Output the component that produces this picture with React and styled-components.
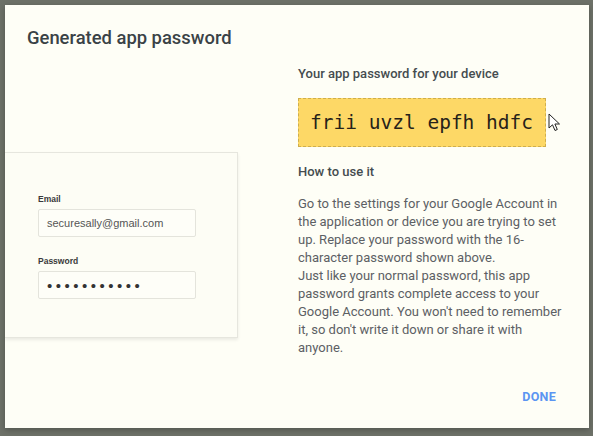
import styled, { createGlobalStyle } from "styled-components";

const GlobalStyle = createGlobalStyle`
  html, body {
    margin: 0;
    padding: 0;
    background: #6d7168;
  }
  body {
    font-family: Roboto, "Noto Sans", Arial, sans-serif;
  }
`;

const Backdrop = styled.div`
  width: 593px;
  height: 436px;
  padding: 5px 4px 8px 5px;
  box-sizing: border-box;
`;

const Dialog = styled.div`
  width: 584px;
  height: 423px;
  background: #fefef6;
  display: flex;
  flex-direction: column;
  overflow: hidden;
  box-shadow: 0 2px 6px rgba(0, 0, 0, 0.25);
`;

const Title = styled.h2`
  margin: 0;
  padding: 21px 22px 0;
  font-size: 18.4px;
  line-height: 24px;
  font-weight: 500;
  color: #3a4246;
`;

const Body = styled.div`
  display: flex;
`;

const LeftPane = styled.div`
  width: 293px;
  flex-shrink: 0;
`;

const LoginCard = styled.div`
  margin-top: 102px;
  width: 233px;
  height: 186px;
  border: 1px solid #e6e6de;
  border-left: none;
  background: #fdfdf5;
  box-shadow: 0 2px 3px rgba(0, 0, 0, 0.08);
  padding: 41px 0 0 33px;
  box-sizing: border-box;
  font-family: "Liberation Sans", Arial, sans-serif;
`;

const FieldLabel = styled.div`
  font-size: 8.5px;
  line-height: 10px;
  font-weight: bold;
  color: #3a3a3a;
  margin-bottom: 5px;
`;

const FieldBox = styled.div`
  width: 158px;
  height: 28px;
  box-sizing: border-box;
  border: 1px solid #e4e4dc;
  border-radius: 2px;
  background: #fefef8;
  padding-left: 8px;
  display: flex;
  align-items: center;
  font-size: ${(p) => (p.$dots ? "15px" : "11px")};
  letter-spacing: ${(p) => (p.$dots ? "3.5px" : "0")};
  color: ${(p) => (p.$dots ? "#333" : "#555")};
  margin-bottom: ${(p) => (p.$last ? "0" : "19px")};
`;

const RightPane = styled.div`
  flex: 1;
  padding: 14px 24px 0 0;
  color: #3c4043;
`;

const Heading = styled.div`
  font-size: 13px;
  line-height: 20px;
  font-weight: 500;
  color: #454c4f;
`;

const PasswordWrap = styled.div`
  position: relative;
  margin: 14px 0 15px;
  display: inline-block;
`;

const PasswordBox = styled.div`
  height: 49px;
  box-sizing: border-box;
  padding: 0 12px 0 11px;
  background: #fdd866;
  border: 1px dashed #cfae4c;
  font-family: "DejaVu Sans Mono", "Liberation Mono", monospace;
  font-size: 19.5px;
  line-height: 47px;
  color: #262219;
  white-space: nowrap;
`;

const Cursor = styled.svg`
  position: absolute;
  left: 250px;
  top: 15px;
`;

const Paragraph = styled.p`
  margin: 13px 0 0;
  font-size: 13px;
  line-height: 18px;
  color: #5c6064;
`;

const Footer = styled.div`
  margin-top: auto;
  display: flex;
  justify-content: flex-end;
  padding: 0 25px 14px;
`;

const TextButton = styled.button`
  height: 36px;
  padding: 0 8px;
  border: none;
  background: transparent;
  font-family: Roboto, Arial, sans-serif;
  font-size: 12.5px;
  font-weight: 700;
  letter-spacing: 0.3px;
  color: #5b95f2;
  cursor: pointer;
`;

export default function App() {
  return (
    <>
      <GlobalStyle />
      <Backdrop>
        <Dialog>
          <Title>Generated app password</Title>
          <Body>
            <LeftPane>
              <LoginCard>
                <FieldLabel>Email</FieldLabel>
                <FieldBox>securesally@gmail.com</FieldBox>
                <FieldLabel>Password</FieldLabel>
                <FieldBox $dots $last>
                  •••••••••••
                </FieldBox>
              </LoginCard>
            </LeftPane>
            <RightPane>
              <Heading>Your app password for your device</Heading>
              <PasswordWrap>
                <PasswordBox>frii uvzl epfh hdfc</PasswordBox>
                <Cursor width="13" height="19" viewBox="0 0 13 19">
                  <path
                    d="M1 1 L1 15 L4.5 11.8 L7 17.5 L9.3 16.5 L6.9 11 L11.5 11 Z"
                    fill="#fff"
                    stroke="#222"
                    strokeWidth="1"
                    strokeLinejoin="round"
                  />
                </Cursor>
              </PasswordWrap>
              <Heading>How to use it</Heading>
              <Paragraph>
                Go to the settings for your Google Account in the application or
                device you are trying to set up. Replace your password with the
                16-character password shown above.
                <br />
                Just like your normal password, this app password grants complete
                access to your Google Account. You won't need to remember it, so
                don't write it down or share it with anyone.
              </Paragraph>
            </RightPane>
          </Body>
          <Footer>
            <TextButton>DONE</TextButton>
          </Footer>
        </Dialog>
      </Backdrop>
    </>
  );
}
